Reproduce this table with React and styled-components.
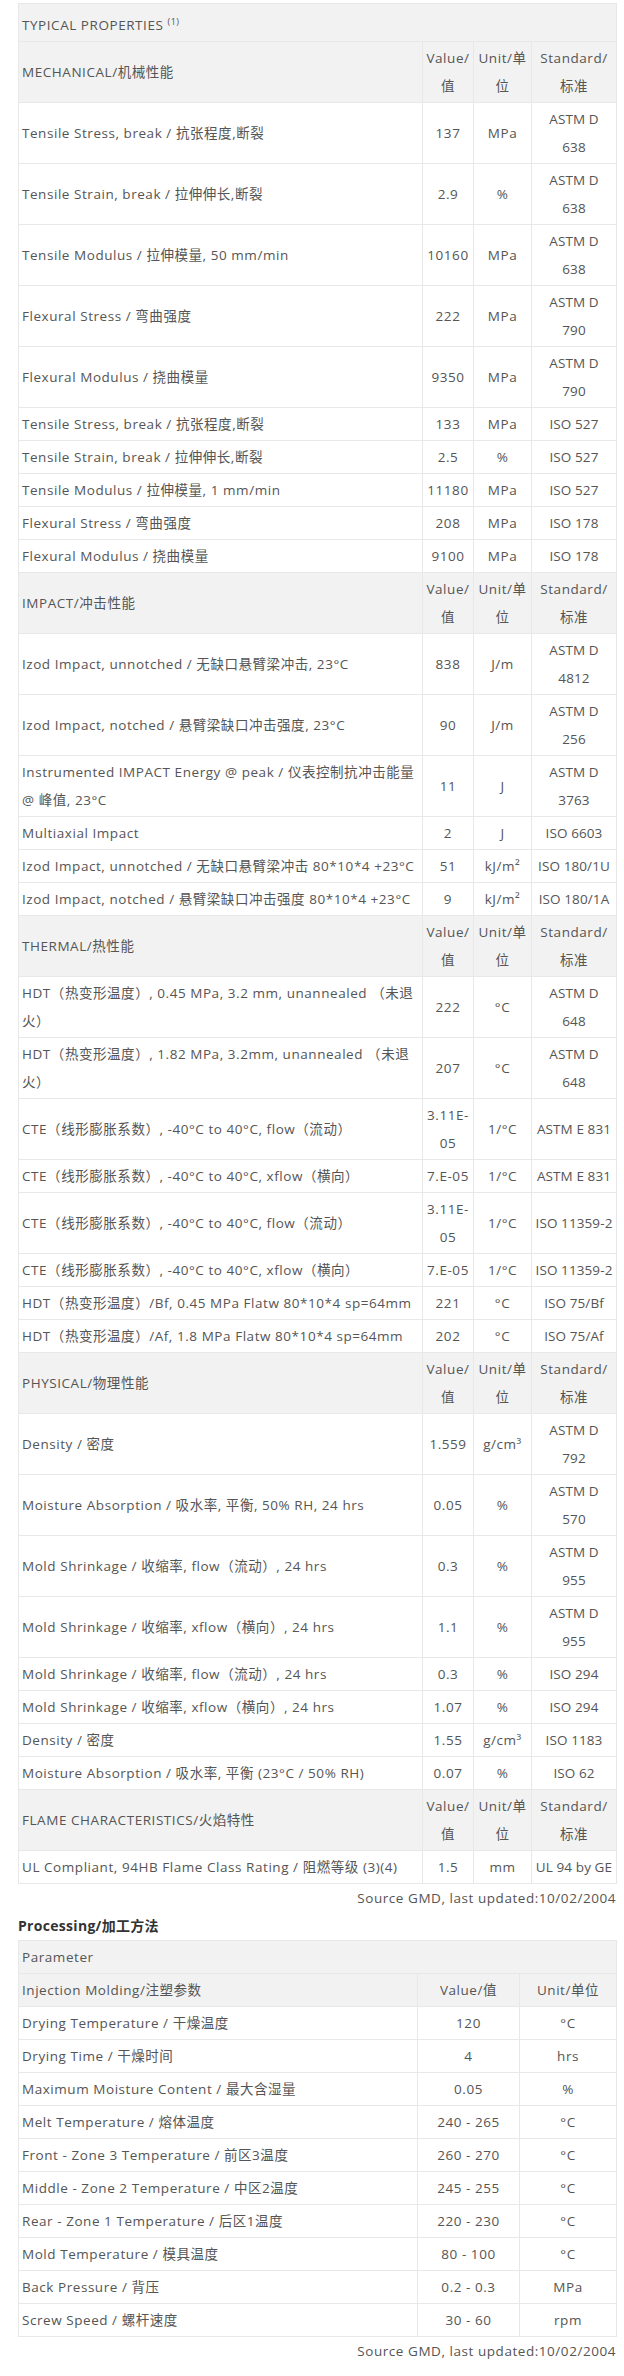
import React from "react";
import styled, { createGlobalStyle } from "styled-components";

const GlobalStyle = createGlobalStyle`
  body {
    margin: 0;
    background: #fff;
    font-family: "Open Sans", "Noto Sans CJK SC", sans-serif;
  }
`;

const sections = [
  {
    title: "MECHANICAL/机械性能",
    rows: [
      ["Tensile Stress, break / 抗张程度,断裂", "137", "MPa", "ASTM D\n638"],
      ["Tensile Strain, break / 拉伸伸长,断裂", "2.9", "%", "ASTM D\n638"],
      ["Tensile Modulus / 拉伸模量, 50 mm/min", "10160", "MPa", "ASTM D\n638"],
      ["Flexural Stress / 弯曲强度", "222", "MPa", "ASTM D\n790"],
      ["Flexural Modulus / 挠曲模量", "9350", "MPa", "ASTM D\n790"],
      ["Tensile Stress, break / 抗张程度,断裂", "133", "MPa", "ISO 527"],
      ["Tensile Strain, break / 拉伸伸长,断裂", "2.5", "%", "ISO 527"],
      ["Tensile Modulus / 拉伸模量, 1 mm/min", "11180", "MPa", "ISO 527"],
      ["Flexural Stress / 弯曲强度", "208", "MPa", "ISO 178"],
      ["Flexural Modulus / 挠曲模量", "9100", "MPa", "ISO 178"],
    ],
  },
  {
    title: "IMPACT/冲击性能",
    rows: [
      ["Izod Impact, unnotched / 无缺口悬臂梁冲击, 23°C", "838", "J/m", "ASTM D\n4812"],
      ["Izod Impact, notched / 悬臂梁缺口冲击强度, 23°C", "90", "J/m", "ASTM D\n256"],
      ["Instrumented IMPACT Energy @ peak / 仪表控制抗冲击能量 @ 峰值, 23°C", "11", "J", "ASTM D\n3763"],
      ["Multiaxial Impact", "2", "J", "ISO 6603"],
      ["Izod Impact, unnotched / 无缺口悬臂梁冲击 80*10*4 +23°C", "51", "kJ/m²", "ISO 180/1U"],
      ["Izod Impact, notched / 悬臂梁缺口冲击强度 80*10*4 +23°C", "9", "kJ/m²", "ISO 180/1A"],
    ],
  },
  {
    title: "THERMAL/热性能",
    rows: [
      ["HDT（热变形温度）, 0.45 MPa, 3.2 mm, unannealed （未退火）", "222", "°C", "ASTM D\n648"],
      ["HDT（热变形温度）, 1.82 MPa, 3.2mm, unannealed （未退火）", "207", "°C", "ASTM D\n648"],
      ["CTE（线形膨胀系数）, -40°C to 40°C, flow（流动）", "3.11E-05", "1/°C", "ASTM E 831"],
      ["CTE（线形膨胀系数）, -40°C to 40°C, xflow（横向）", "7.E-05", "1/°C", "ASTM E 831"],
      ["CTE（线形膨胀系数）, -40°C to 40°C, flow（流动）", "3.11E-05", "1/°C", "ISO 11359-2"],
      ["CTE（线形膨胀系数）, -40°C to 40°C, xflow（横向）", "7.E-05", "1/°C", "ISO 11359-2"],
      ["HDT（热变形温度）/Bf, 0.45 MPa Flatw 80*10*4 sp=64mm", "221", "°C", "ISO 75/Bf"],
      ["HDT（热变形温度）/Af, 1.8 MPa Flatw 80*10*4 sp=64mm", "202", "°C", "ISO 75/Af"],
    ],
  },
  {
    title: "PHYSICAL/物理性能",
    rows: [
      ["Density / 密度", "1.559", "g/cm³", "ASTM D\n792"],
      ["Moisture Absorption / 吸水率, 平衡, 50% RH, 24 hrs", "0.05", "%", "ASTM D\n570"],
      ["Mold Shrinkage / 收缩率, flow（流动）, 24 hrs", "0.3", "%", "ASTM D\n955"],
      ["Mold Shrinkage / 收缩率, xflow（横向）, 24 hrs", "1.1", "%", "ASTM D\n955"],
      ["Mold Shrinkage / 收缩率, flow（流动）, 24 hrs", "0.3", "%", "ISO 294"],
      ["Mold Shrinkage / 收缩率, xflow（横向）, 24 hrs", "1.07", "%", "ISO 294"],
      ["Density / 密度", "1.55", "g/cm³", "ISO 1183"],
      ["Moisture Absorption / 吸水率, 平衡 (23°C / 50% RH)", "0.07", "%", "ISO 62"],
    ],
  },
  {
    title: "FLAME CHARACTERISTICS/火焰特性",
    rows: [
      ["UL Compliant, 94HB Flame Class Rating / 阻燃等级 (3)(4)", "1.5", "mm", "UL 94 by GE"],
    ],
  },
];

const processing = [
  ["Drying Temperature / 干燥温度", "120", "°C"],
  ["Drying Time / 干燥时间", "4", "hrs"],
  ["Maximum Moisture Content / 最大含湿量", "0.05", "%"],
  ["Melt Temperature / 熔体温度", "240 - 265", "°C"],
  ["Front - Zone 3 Temperature / 前区3温度", "260 - 270", "°C"],
  ["Middle - Zone 2 Temperature / 中区2温度", "245 - 255", "°C"],
  ["Rear - Zone 1 Temperature / 后区1温度", "220 - 230", "°C"],
  ["Mold Temperature / 模具温度", "80 - 100", "°C"],
  ["Back Pressure / 背压", "0.2 - 0.3", "MPa"],
  ["Screw Speed / 螺杆速度", "30 - 60", "rpm"],
];

const App = () => {
  return (
    <>
      <GlobalStyle />
      <Page>
        <DataTable>
          <colgroup>
            <col style={{ width: 404 }} />
            <col style={{ width: 51 }} />
            <col style={{ width: 58 }} />
            <col style={{ width: 85 }} />
          </colgroup>
          <tbody>
            <tr>
              <TitleCell colSpan={4}>
                TYPICAL PROPERTIES <Sup>(1)</Sup>
              </TitleCell>
            </tr>
            {sections.map((section) => (
              <React.Fragment key={section.title}>
                <tr>
                  <HeadCell>{section.title}</HeadCell>
                  <HeadCell center>Value/值</HeadCell>
                  <HeadCell center>Unit/单位</HeadCell>
                  <HeadCell center>Standard/标准</HeadCell>
                </tr>
                {section.rows.map((row, i) => (
                  <tr key={i}>
                    <Cell>{row[0]}</Cell>
                    <Cell center>{row[1]}</Cell>
                    <Cell center>{row[2]}</Cell>
                    <StandardCell>{row[3]}</StandardCell>
                  </tr>
                ))}
              </React.Fragment>
            ))}
          </tbody>
        </DataTable>
        <Source>Source GMD, last updated:10/02/2004</Source>

        <SectionTitle>Processing/加工方法</SectionTitle>
        <DataTable>
          <colgroup>
            <col style={{ width: 399 }} />
            <col style={{ width: 102 }} />
            <col style={{ width: 97 }} />
          </colgroup>
          <tbody>
            <tr>
              <HeadCell colSpan={3}>Parameter</HeadCell>
            </tr>
            <tr>
              <HeadCell>Injection Molding/注塑参数</HeadCell>
              <HeadCell center>Value/值</HeadCell>
              <HeadCell center>Unit/单位</HeadCell>
            </tr>
            {processing.map((row, i) => (
              <tr key={i}>
                <Cell>{row[0]}</Cell>
                <Cell center>{row[1]}</Cell>
                <Cell center>{row[2]}</Cell>
              </tr>
            ))}
          </tbody>
        </DataTable>
        <Source>Source GMD, last updated:10/02/2004</Source>
      </Page>
    </>
  );
};

const Page = styled.div`
  padding: 3px 8px 11px 18px;
  color: #555;
  font-size: 13.5px;
  letter-spacing: 0.55px;
`;

const DataTable = styled.table`
  width: 598px;
  table-layout: fixed;
  border-collapse: collapse;
  border: 1px solid #333;
`;

const Cell = styled.td`
  padding: 2px 3px;
  line-height: 28px;
  border: 1px solid #e8e8e8;
  text-align: ${(props) => (props.center ? "center" : "left")};
  vertical-align: middle;
  word-wrap: break-word;
`;

const StandardCell = styled(Cell)`
  padding: 2px 1px;
  text-align: center;
  white-space: pre;
  letter-spacing: 0.1px;
`;

const HeadCell = styled(Cell)`
  background-color: #f2f2f2;
`;

const TitleCell = styled(HeadCell)`
  padding: 7px 3px 2px;
`;

const Sup = styled.sup`
  font-size: 9px;
  line-height: 0;
`;

const Source = styled.div`
  width: 598px;
  text-align: right;
  line-height: 28px;
`;

const SectionTitle = styled.div`
  font-size: 14px;
  font-weight: 700;
  color: #333;
  line-height: 28px;
  letter-spacing: 0.3px;
`;

export default App;
